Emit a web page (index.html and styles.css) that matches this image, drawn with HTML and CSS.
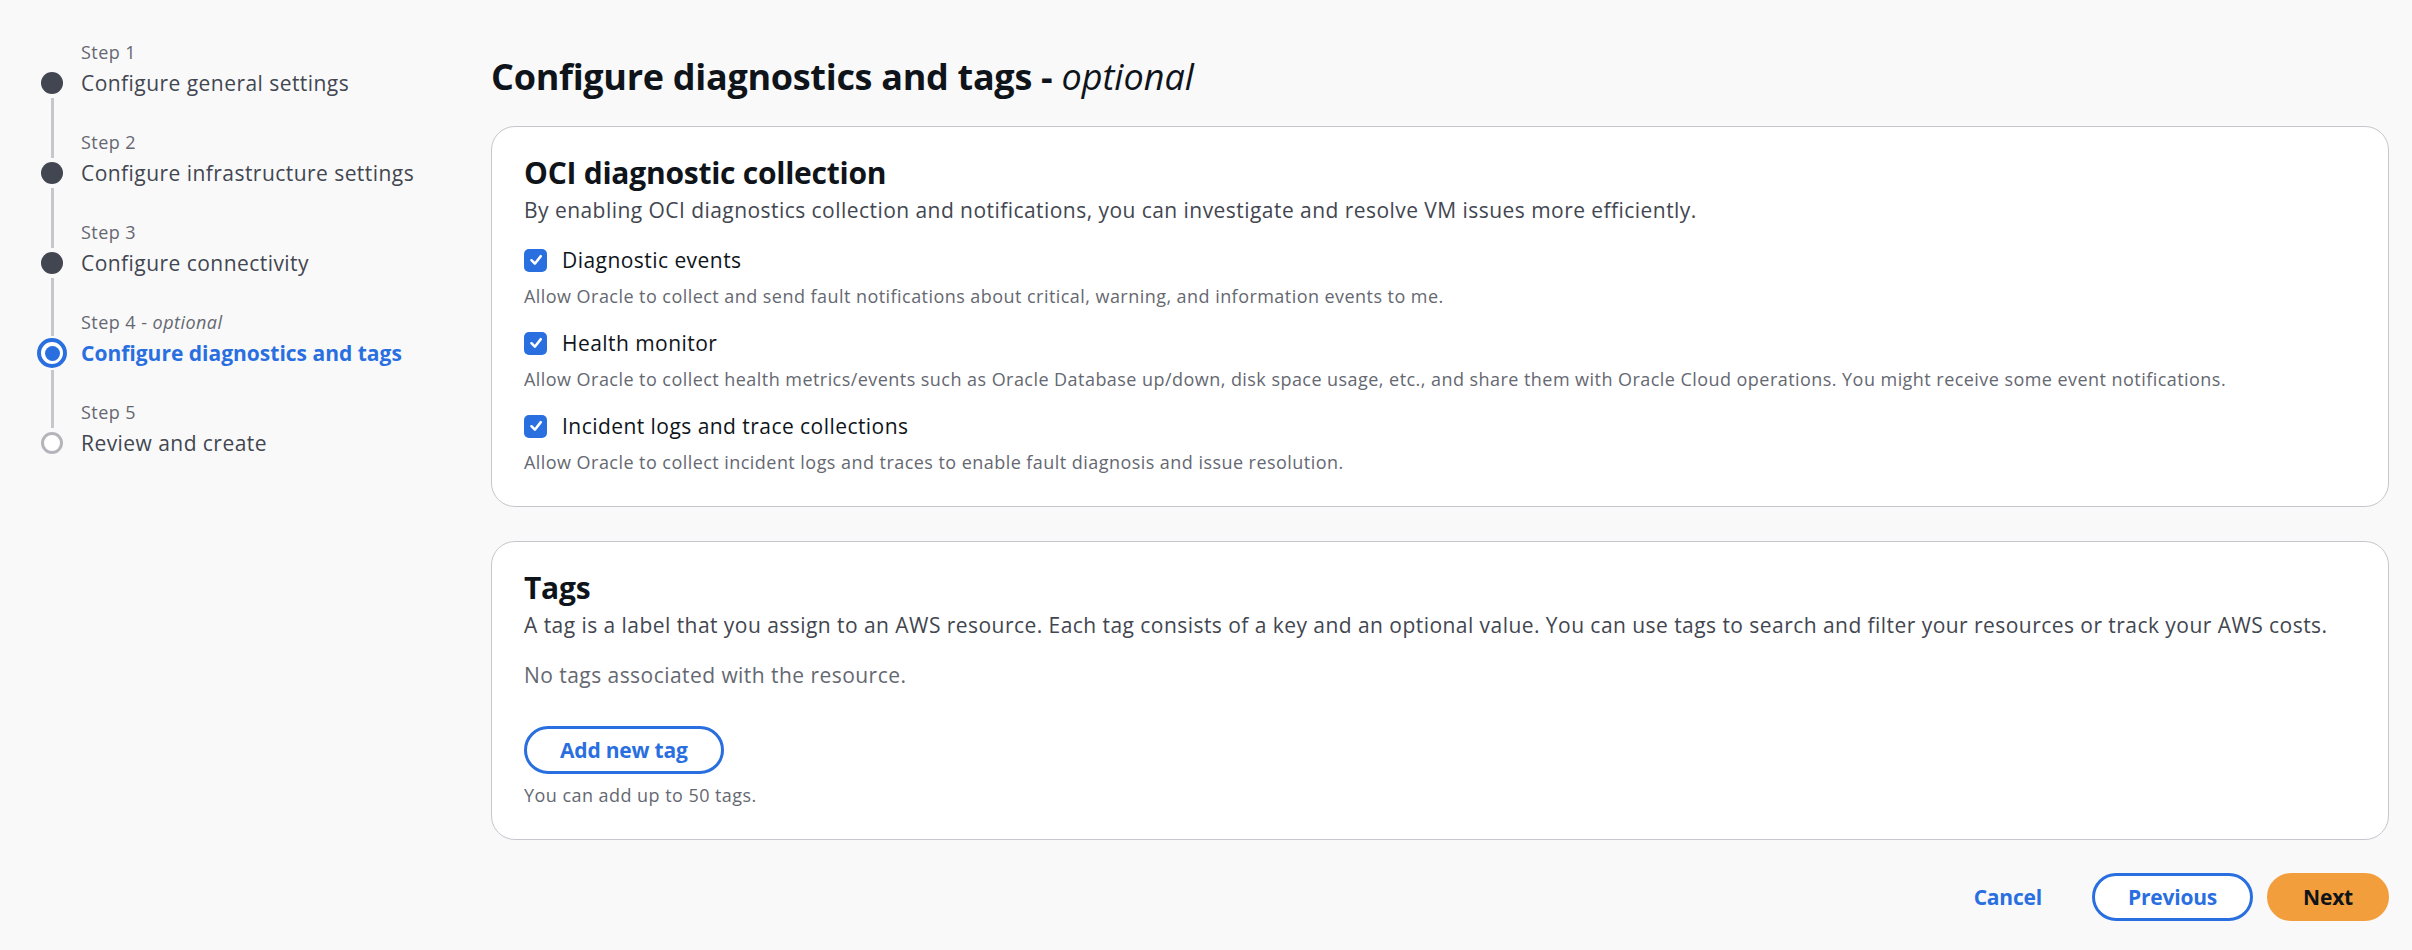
FILE: index.html
```html
<!DOCTYPE html>
<html lang="en">
<head>
<meta charset="utf-8">
<title>Configure diagnostics and tags</title>
<link rel="stylesheet" href="styles.css">
</head>
<body>
<div class="page">
  <nav class="steps" aria-label="Steps">
    <ol class="step-list">
      <li class="step done first">
        <div class="rail"><span class="rail-top"></span><span class="dot"></span><span class="rail-bottom"></span></div>
        <div class="step-text"><div class="step-label">Step 1</div><div class="step-title">Configure general settings</div></div>
      </li>
      <li class="step done">
        <div class="rail"><span class="rail-top"></span><span class="dot"></span><span class="rail-bottom"></span></div>
        <div class="step-text"><div class="step-label">Step 2</div><div class="step-title">Configure infrastructure settings</div></div>
      </li>
      <li class="step done">
        <div class="rail"><span class="rail-top"></span><span class="dot"></span><span class="rail-bottom"></span></div>
        <div class="step-text"><div class="step-label">Step 3</div><div class="step-title">Configure connectivity</div></div>
      </li>
      <li class="step active">
        <div class="rail"><span class="rail-top"></span><span class="dot"></span><span class="rail-bottom"></span></div>
        <div class="step-text"><div class="step-label">Step 4 - <i>optional</i></div><div class="step-title">Configure diagnostics and tags</div></div>
      </li>
      <li class="step todo last">
        <div class="rail"><span class="rail-top"></span><span class="dot"></span><span class="rail-bottom"></span></div>
        <div class="step-text"><div class="step-label">Step 5</div><div class="step-title">Review and create</div></div>
      </li>
    </ol>
  </nav>
  <main class="main">
    <h1 class="page-title">Configure diagnostics and tags - <em>optional</em></h1>
    <section class="card">
      <h2 class="card-title">OCI diagnostic collection</h2>
      <p class="card-desc">By enabling OCI diagnostics collection and notifications, you can investigate and resolve VM issues more efficiently.</p>
      <div class="options">
        <div class="option">
          <div class="option-head"><span class="check"><svg viewBox="0 0 14 14" width="16" height="16"><path d="M3 7.2 L6 10.2 L11.2 3.6" fill="none" stroke="#fff" stroke-width="2.2" stroke-linecap="round" stroke-linejoin="round"/></svg></span><span class="option-label">Diagnostic events</span></div>
          <div class="option-desc">Allow Oracle to collect and send fault notifications about critical, warning, and information events to me.</div>
        </div>
        <div class="option">
          <div class="option-head"><span class="check"><svg viewBox="0 0 14 14" width="16" height="16"><path d="M3 7.2 L6 10.2 L11.2 3.6" fill="none" stroke="#fff" stroke-width="2.2" stroke-linecap="round" stroke-linejoin="round"/></svg></span><span class="option-label">Health monitor</span></div>
          <div class="option-desc">Allow Oracle to collect health metrics/events such as Oracle Database up/down, disk space usage, etc., and share them with Oracle Cloud operations. You might receive some event notifications.</div>
        </div>
        <div class="option">
          <div class="option-head"><span class="check"><svg viewBox="0 0 14 14" width="16" height="16"><path d="M3 7.2 L6 10.2 L11.2 3.6" fill="none" stroke="#fff" stroke-width="2.2" stroke-linecap="round" stroke-linejoin="round"/></svg></span><span class="option-label">Incident logs and trace collections</span></div>
          <div class="option-desc">Allow Oracle to collect incident logs and traces to enable fault diagnosis and issue resolution.</div>
        </div>
      </div>
    </section>
    <section class="card">
      <h2 class="card-title">Tags</h2>
      <p class="card-desc">A tag is a label that you assign to an AWS resource. Each tag consists of a key and an optional value. You can use tags to search and filter your resources or track your AWS costs.</p>
      <p class="empty">No tags associated with the resource.</p>
      <button class="btn btn-normal add-tag" type="button">Add new tag</button>
      <p class="hint">You can add up to 50 tags.</p>
    </section>
    <div class="actions">
      <button class="btn btn-link" type="button">Cancel</button>
      <button class="btn btn-normal" type="button">Previous</button>
      <button class="btn btn-primary" type="button">Next</button>
    </div>
  </main>
</div>
</body>
</html>
```

FILE: styles.css
```css
* { box-sizing: border-box; }
html, body { margin: 0; padding: 0; }
body {
  background: #f9f9fa;
  font-family: "Open Sans", "Noto Sans", "Liberation Sans", sans-serif;
  letter-spacing: 0.45px;
  color: #0f141a;
  width: 2412px;
  height: 950px;
  overflow: hidden;
}
.page {
  display: grid;
  grid-template-columns: 491px 1fr;
  padding-right: 23px;
}

/* Steps navigation */
.steps { padding: 40px 0 0 32px; }
.step-list { list-style: none; margin: 0; padding: 0; }
.step { display: flex; gap: 9px; }
.rail {
  width: 40px;
  flex: none;
  display: flex;
  flex-direction: column;
  align-items: center;
}
.rail-top { width: 3px; height: 28px; background: #c6c6cd; flex: none; }
.rail-bottom { width: 3px; flex: 1; background: #c6c6cd; }
.first .rail-top, .last .rail-bottom { visibility: hidden; }
.dot {
  width: 22px;
  height: 22px;
  margin: 4px 0;
  border-radius: 50%;
  background: #424650;
  flex: none;
}
.active .rail-top { height: 26px; }
.active .dot {
  width: 30px;
  height: 30px;
  margin: 2px 0;
  background: #fff;
  border: 4px solid #2a6fe0;
  display: flex;
  align-items: center;
  justify-content: center;
}
.active .dot::after {
  content: "";
  width: 15px;
  height: 15px;
  border-radius: 50%;
  background: #2a6fe0;
}
.todo .dot {
  background: #fff;
  border: 3px solid #b4b4bb;
}
.step-text { padding-bottom: 32px; }
.step-label { font-size: 18px; line-height: 24px; color: #656871; margin-bottom: 4px; }
.step-title { font-size: 21px; line-height: 30px; color: #424650; }
.active .step-title { color: #2a6fe0; font-weight: 700; letter-spacing: 0; }

/* Main */
.main { padding-top: 55px; }
.page-title {
  margin: 0 0 27px;
  font-size: 36px;
  line-height: 44px;
  font-weight: 700;
  letter-spacing: -0.3px;
  color: #0f141a;
}
.page-title em { font-weight: 400; letter-spacing: 0; }
.card {
  background: #fff;
  border: 1px solid #c6c6cd;
  border-radius: 24px;
  padding: 28px 32px 32px;
}
.card + .card { margin-top: 34px; }
.card-title {
  margin: 0;
  font-size: 30px;
  line-height: 36px;
  font-weight: 700;
  letter-spacing: -0.25px;
  color: #0f141a;
}
.card-desc { margin: 4px 0 0; font-size: 21px; line-height: 30px; color: #424650; }
.options { margin-top: 20px; display: flex; flex-direction: column; gap: 20px; }
.option-head { display: flex; align-items: center; gap: 15px; }
.check {
  width: 23px;
  height: 23px;
  border-radius: 5px;
  background: #2a6fe0;
  display: flex;
  align-items: center;
  justify-content: center;
  flex: none;
}
.option-label { font-size: 21px; line-height: 30px; color: #0f141a; }
.option-desc { margin-top: 9px; font-size: 18px; line-height: 24px; color: #656871; }
.empty { margin: 20px 0 0; font-size: 21px; line-height: 30px; color: #656871; }
.hint { margin: 9px 0 0; font-size: 18px; line-height: 24px; color: #656871; }

/* Buttons */
.btn {
  height: 48px;
  padding: 0 33px;
  border-radius: 24px;
  border: 3px solid transparent;
  font-family: inherit;
  font-size: 21px;
  font-weight: 700;
  letter-spacing: -0.2px;
  line-height: 1;
  display: inline-flex;
  align-items: center;
  cursor: pointer;
}
.btn-normal { background: #fff; border-color: #2a6fe0; color: #2a6fe0; }
.btn-link { background: transparent; color: #2a6fe0; }
.btn-primary { background: #f39e3c; border-color: #f39e3c; color: #0f141a; }
.add-tag { margin-top: 36px; }
.actions {
  margin-top: 33px;
  display: flex;
  justify-content: flex-end;
  gap: 14px;
}
```
